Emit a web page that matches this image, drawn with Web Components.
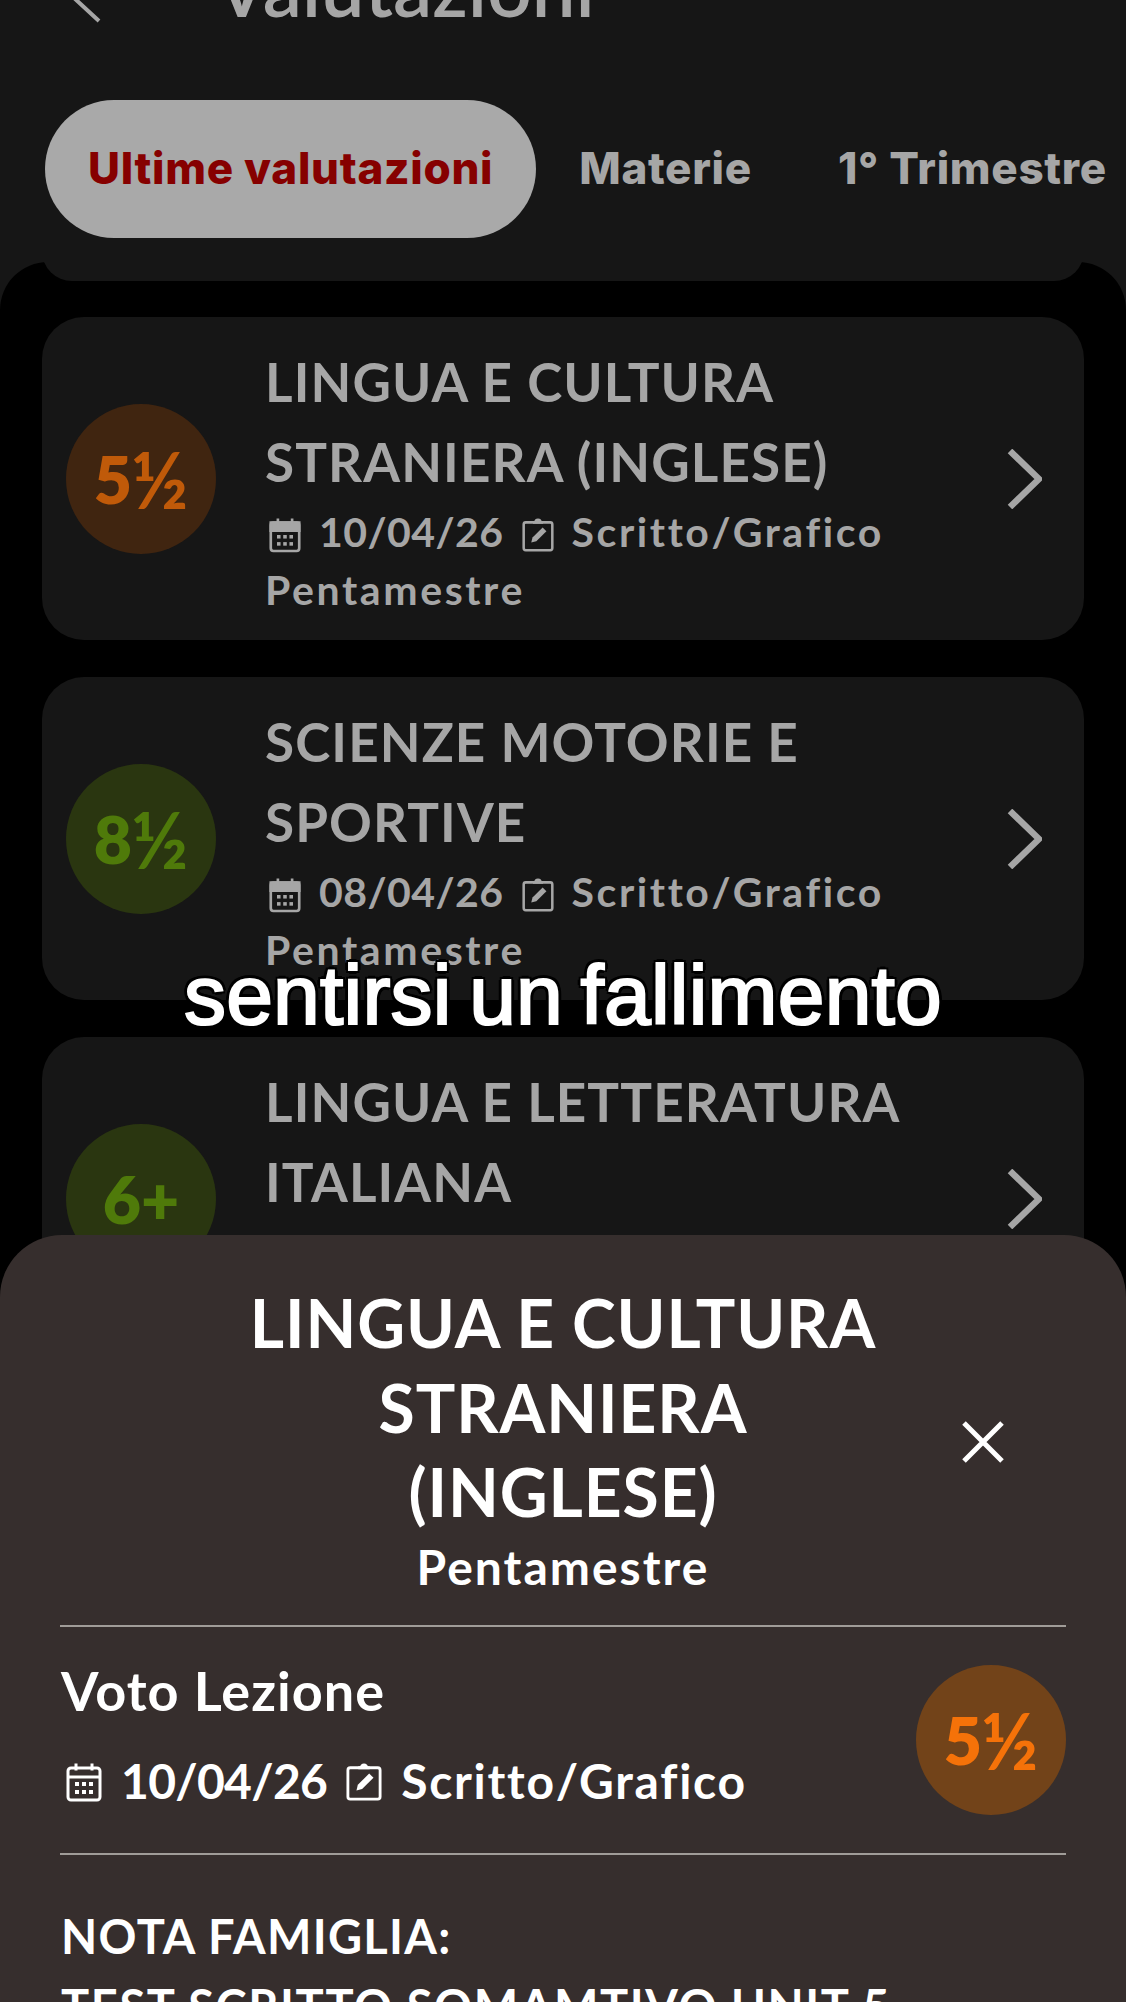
<!DOCTYPE html>
<html lang="it"><head><meta charset="utf-8"><title>Valutazioni</title>
<style>html,body{margin:0;background:#161616}body{width:1126px;height:2002px;overflow:hidden;font-family:Lato,"Liberation Sans",sans-serif}</style>
</head><body>
<val-app>
  <val-header slot="head" title-text="Valutazioni">
    <val-tab active>Ultime valutazioni</val-tab><val-tab>Materie</val-tab><val-tab>1° Trimestre</val-tab>
  </val-header>
  <val-card tone="o" grade="5½" date="10/04/26">LINGUA E CULTURA<br>STRANIERA (INGLESE)</val-card>
  <val-card tone="g" grade="8½" date="08/04/26">SCIENZE MOTORIE E<br>SPORTIVE</val-card>
  <val-card tone="g" grade="6+" date="07/04/26">LINGUA E LETTERATURA<br>ITALIANA</val-card>
  <val-caption slot="over">sentirsi un fallimento</val-caption>
  <val-sheet slot="over"></val-sheet>
</val-app>
<script>
const CAL=s=>`<svg viewBox="0 0 36 40" width="100%" height="100%" fill="none" stroke="currentColor" stroke-width="3"><rect x="2" y="6" width="32" height="32" rx="3"/>${s?'<path d="M2 6h32v9H2z" fill="currentColor"/>':'<path d="M2 15h32"/>'}<path d="M10 1.5v7M26 1.5v7"/><g fill="currentColor" stroke="none"><rect x="9" y="20" width="4" height="4"/><rect x="16" y="20" width="4" height="4"/><rect x="23" y="20" width="4" height="4"/><rect x="9" y="28" width="4" height="4"/><rect x="16" y="28" width="4" height="4"/><rect x="23" y="28" width="4" height="4"/></g></svg>`;
const CLIP='<svg viewBox="0 0 38 40" width="100%" height="100%" fill="none" stroke="currentColor" stroke-width="3"><rect x="2" y="5" width="34" height="33" rx="2.5"/><path d="M13 5h12M16 5a3 3 0 0 1 6 0"/><path d="M11 29l1.5-6 12-12 4.5 4.5-12 12z" fill="currentColor" stroke="none"/></svg>';
function def(n,css,html){customElements.define(n,class extends HTMLElement{connectedCallback(){if(this.shadowRoot)return;const s=this.attachShadow({mode:'open'});s.innerHTML='<style>'+css+'</style>'+(typeof html==='function'?html(this):html);}});}
def('val-app',`:host{display:block;position:relative;width:1126px;height:2002px;overflow:hidden;background:#161616}
.list{background:#000;border-radius:48px 48px 0 0;height:1740px;box-sizing:border-box;padding:0 42px;display:flex;flex-direction:column;gap:36px}
.stub{flex:none;height:19px;overflow:hidden;margin-bottom:0}
.stub div{height:60px;margin-top:-41px;background:#161616;border-radius:42px}`,
`<slot name="head"></slot><div class="list"><div class="stub"><div></div></div><slot></slot></div><slot name="over"></slot>`);
def('val-header',`:host{display:block;height:262px;color:#a6a6a6}
.top{display:flex;align-items:flex-end;height:24px;overflow:hidden;padding-left:70px;gap:113px}
.top svg{width:32px;height:50px;flex:none;margin-bottom:1px}
.t{font:600 78px/1 Lato,sans-serif;margin-bottom:-2px;white-space:nowrap}
.tabs{display:flex;margin:76px 0 0 45px;align-items:center}`,
t=>`<div class="top"><svg viewBox="0 0 32 50" fill="none" stroke="#a6a6a6" stroke-width="4"><path d="M29 1L3 24l26 24"/></svg><span class="t">${t.getAttribute('title-text')}</span></div><div class="tabs"><slot></slot></div>`);
def('val-tab',`:host{display:flex;align-items:center;justify-content:center;height:138px;padding:0 43px 2px;box-sizing:border-box;font:800 44px/1 Inter,Roboto,sans-serif;letter-spacing:.7px;color:#a6a6a6;border-radius:69px;white-space:nowrap}
:host([active]){background:#a9a9a9;color:#860000}`,`<slot></slot>`);
def('val-grade',`:host{display:flex;flex:none;align-items:center;justify-content:center;width:150px;height:150px;border-radius:50%;font:800 66px/1 Lato,sans-serif}
:host([tone=o]){background:#402510;color:#c05a09}:host([tone=g]){background:#2a3610;color:#4f7a0a}:host([tone=O]){background:#724319;color:#f57209}
span{font-size:78px;font-weight:700;line-height:66px;margin-left:-1px}`,
t=>{const g=t.getAttribute('grade');return g.endsWith('½')?`${g[0]}<span>½</span>`:g;});
def('val-meta',`:host{display:flex;align-items:center;white-space:nowrap;gap:var(--g,18px)}
i{display:block;flex:none;width:var(--iw,32px);height:var(--ih,36px);transform:translateY(var(--iy,-5px))}
i:first-of-type{margin-left:var(--il,0)}
.d{letter-spacing:var(--dls,1px)}`,
t=>`<i>${CAL(t.hasAttribute('solid'))}</i><span class="d">${t.getAttribute('date')}</span><i>${CLIP}</i><span>Scritto/Grafico</span>`);
def('val-card',`:host{display:flex;flex:none;align-items:center;height:323px;margin-bottom:1px;box-sizing:border-box;background:#161616;border-radius:42px;padding:0 42px 0 24px;color:#a6a6a6;overflow:hidden}
.b{flex:1;margin-left:49px;min-width:0;display:flex;flex-direction:column;padding-top:3px}
.t{font:700 53px/80.5px Lato,sans-serif;letter-spacing:1.1px}
.m{font:700 41px/58px Lato,sans-serif;letter-spacing:2.6px}
val-meta{height:58px;--iw:32px;--ih:36px;--dls:.45px;--il:4px;--g:18px}
svg{flex:none;width:35px;height:60px}`,
t=>`<val-grade tone="${t.getAttribute('tone')}" grade="${t.getAttribute('grade')}"></val-grade><div class="b"><div class="t"><slot></slot></div><div class="m"><val-meta solid date="${t.getAttribute('date')}"></val-meta><div>Pentamestre</div></div></div><svg viewBox="0 0 35 60" fill="none" stroke="#a6a6a6" stroke-width="6.5"><path d="M3 2l29 28L3 58"/></svg>`);
def('val-caption',`:host{position:absolute;left:0;right:0;top:945px;text-align:center;font:400 84px/100px "Liberation Sans",Arial,sans-serif;color:#fff;-webkit-text-stroke:2.2px #fff;text-shadow:4px 0 0 #000,-4px 0 0 #000,0 4px 0 #000,0 -4px 0 #000,3px 3px 0 #000,-3px 3px 0 #000,3px -3px 0 #000,-3px -3px 0 #000;white-space:nowrap;letter-spacing:.2px;word-spacing:-6px}`,`<slot></slot>`);
def('val-sheet',`:host{position:absolute;left:0;right:0;top:1235px;height:767px;overflow:hidden;box-sizing:border-box;background:#362e2d;border-radius:62px 62px 0 0;color:#fff;padding:46px 60px 0}
.h{display:grid;grid-template-columns:1fr auto 1fr;align-items:center;text-align:center;border-bottom:2px solid #a09c98;padding-bottom:28px}
.c{grid-column:2}
.n{font:700 66px/84.5px Lato,sans-serif;letter-spacing:.9px}
.x{grid-column:3;justify-self:end;margin:6px 62px 0 0;width:42px;height:42px}
.p{font:700 48px/60px Lato,sans-serif;letter-spacing:2px;margin-top:2px}
.r{display:flex;align-items:center;justify-content:space-between;height:226px;border-bottom:2px solid #a09c98}
.l{font:700 54px/70px Lato,sans-serif;letter-spacing:1px;margin:-12px 0 0 1px}
val-meta{font:700 48px/60px Lato,sans-serif;letter-spacing:1.7px;margin:25px 0 0 6px;--iw:36px;--ih:40px;--g:19px;--dls:-.7px;--iy:-7px}
.note{font:700 47px/70px Lato,sans-serif;letter-spacing:1.6px;padding-top:46px;margin-left:1px}
.note b{font-weight:inherit;letter-spacing:1.3px}`,
`<div class="h"><div class="c"><div class="n">LINGUA E CULTURA<br>STRANIERA<br>(INGLESE)</div><div class="p">Pentamestre</div></div><svg class="x" viewBox="0 0 42 42" fill="none" stroke="#fff" stroke-width="5"><path d="M2 2l38 38M40 2L2 40"/></svg></div>
<div class="r"><div><div class="l">Voto Lezione</div><val-meta date="10/04/26"></val-meta></div><val-grade tone="O" grade="5½"></val-grade></div>
<div class="note"><b>NOTA FAMIGLIA:</b><br>TEST SCRITTO SOMAMTIVO UNIT 5</div>`);
</script>
</body></html>
